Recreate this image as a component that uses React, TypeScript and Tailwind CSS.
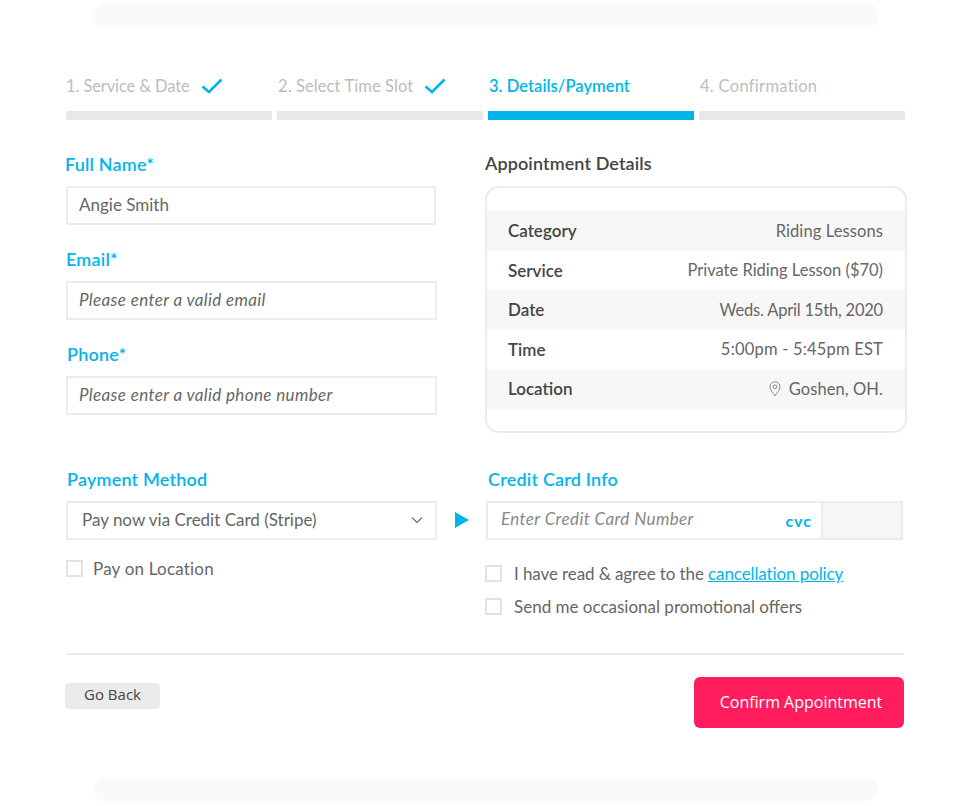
import React from "react";

const font = { fontFamily: '"Lato", "Open Sans", sans-serif' };

function Check() {
  return (
    <svg width="22" height="16" viewBox="0 0 22 16" fill="none" className="ml-[11px]">
      <path d="M1.5 8.5 L8 14 L20.5 1.5" stroke="#00b5ea" strokeWidth="2.6" />
    </svg>
  );
}

function Step({ label, done, active, cls }: { label: string; done?: boolean; active?: boolean; cls: string }) {
  return (
    <div className="w-[206px]">
      <div className="h-[37px] flex items-start">
        <div className={"flex items-center h-[24px] text-[16.5px] " + (active ? "text-[#00b5ea] font-semibold " : "text-[#bdbdbd] ") + cls}>
          {label}
          {done && <Check />}
        </div>
      </div>
      <div className={"h-[9px] " + (active ? "bg-[#00b5ea]" : "bg-[#e8e8e8]")} />
    </div>
  );
}

function Label({ children, cls = "" }: { children: React.ReactNode; cls?: string }) {
  return <div className={"h-[24px] flex items-center text-[18px] font-semibold tracking-[0.2px] text-[#00b5ea] " + cls}>{children}</div>;
}

function Input({ text, italic, cls = "" }: { text: string; italic?: boolean; cls?: string }) {
  return (
    <div className={"h-[39px] mt-[10px] border-2 border-[#ececec] flex items-center pl-[11px] pb-[2px] text-[17px] text-[#666] " + (italic ? "italic tracking-[0.38px] " : "") + cls}>
      {text}
    </div>
  );
}

function Row({ k, v, gray, pin, track }: { k: string; v: string; gray?: boolean; pin?: boolean; track: string }) {
  return (
    <div className={"h-[39.5px] flex items-center justify-between pl-[21px] pr-[22px] " + (gray ? "bg-[#f7f7f7]" : "bg-white")}>
      <span className="text-[17px] font-semibold text-[#444]">{k}</span>
      <span className={"flex items-center pt-[1px] text-[16.5px] text-[#666] " + track}>
        {pin && (
          <svg width="12" height="16" viewBox="0 0 12 16" fill="none" className="mr-[8px]" stroke="#8a8a8a" strokeWidth="1">
            <path d="M6 15 C4 11.5 1 9 1 5.8 A5 5 0 0 1 11 5.8 C11 9 8 11.5 6 15 Z" />
            <circle cx="6" cy="5.8" r="1.9" />
          </svg>
        )}
        {v}
      </span>
    </div>
  );
}

function Box({ children, cls = "", gap = "mr-[12px]" }: { children: React.ReactNode; cls?: string; gap?: string }) {
  return (
    <div className={"flex items-center text-[17px] text-[#666] " + cls}>
      <span className={"w-[17px] h-[17px] border-2 border-[#e2e2e2] shrink-0 " + gap} />
      <span>{children}</span>
    </div>
  );
}

export default function App() {
  return (
    <div className="w-[973px] h-[806px] bg-white overflow-hidden pt-[4px]" style={font}>
      <div className="h-[23px] mx-[94px] rounded-[12px] bg-[#fafafa]" />

      <div className="mt-[47px] ml-[66px] flex gap-[5px]">
        <Step label="1. Service & Date" done cls="tracking-[-0.1px]" />
        <Step label="2. Select Time Slot" done cls="pl-[1px] tracking-[0.1px]" />
        <Step label="3. Details/Payment" active cls="pl-[1px] tracking-[0.05px]" />
        <Step label="4. Confirmation" cls="pl-[1px] tracking-[0.3px]" />
      </div>

      <div className="mt-[32px] ml-[66px] flex">
        <div className="w-[371px]">
          <Label cls="-ml-[1px]">Full Name*</Label>
          <Input text="Angie Smith" cls="w-[370px]" />
          <Label cls="mt-[22px]">Email*</Label>
          <Input text="Please enter a valid email" italic />
          <Label cls="mt-[22px] ml-[1px]">Phone*</Label>
          <Input text="Please enter a valid phone number" italic />
        </div>
        <div className="ml-[48px] w-[422px]">
          <div className="h-[24px] pb-[1px] flex items-center text-[18px] font-semibold tracking-[0.1px] text-[#444]">Appointment Details</div>
          <div className="mt-[10px] h-[247px] border-2 border-[#ececec] rounded-[14px] pt-[23px] overflow-hidden">
            <Row k="Category" v="Riding Lessons" gray track="tracking-[0.1px]" />
            <Row k="Service" v="Private Riding Lesson ($70)" track="tracking-[0px]" />
            <Row k="Date" v="Weds. April 15th, 2020" gray track="tracking-[-0.2px]" />
            <Row k="Time" v="5:00pm - 5:45pm EST" track="tracking-[0.2px]" />
            <Row k="Location" v="Goshen, OH." gray pin track="tracking-[0.1px]" />
          </div>
        </div>
      </div>

      <div className="mt-[34px] ml-[66px] flex">
        <div className="w-[371px]">
          <Label cls="ml-[1px]">Payment Method</Label>
          <div className="mt-[10px] h-[39px] border-2 border-[#ececec] flex items-center justify-between pl-[14px] pr-[12px] pb-[2px] text-[17px] text-[#666]">
            <span>Pay now via Credit Card (Stripe)</span>
            <svg width="12" height="8" viewBox="0 0 12 8" fill="none" stroke="#777" strokeWidth="1.3">
              <path d="M1 1.5 L6 6.5 L11 1.5" />
            </svg>
          </div>
          <Box cls="mt-[16px] tracking-[0.2px]" gap="mr-[10px]">Pay on Location</Box>
        </div>
        <div className="w-[49px] pt-[45px] pl-[18px]">
          <svg width="14" height="16" viewBox="0 0 14 16">
            <path d="M0 0 L14 8 L0 16 Z" fill="#00b5ea" />
          </svg>
        </div>
        <div className="w-[417px]">
          <Label cls="ml-[2px]">Credit Card Info</Label>
          <div className="mt-[10px] h-[39px] border-2 border-[#ececec] flex items-stretch">
            <div className="flex-1 flex items-center justify-between pl-[13px] pr-[9px]">
              <span className="italic text-[17px] tracking-[0.4px] text-[#888] pb-[3px]">Enter Credit Card Number</span>
              <span className="text-[16px] font-bold tracking-[1px] text-[#00b5ea]">cvc</span>
            </div>
            <div className="w-[80px] border-l-2 border-[#ececec] bg-[#f6f6f6]" />
          </div>
          <Box cls="mt-[21px] -ml-[1px] tracking-[-0.1px]">
            <span>I have read &amp; agree to the <span className="text-[#00b5ea] underline">cancellation policy</span></span>
          </Box>
          <Box cls="mt-[7.5px] -ml-[1px]">Send me occasional promotional offers</Box>
        </div>
      </div>

      <div className="mt-[33px] ml-[66px] mr-[69px] h-[2px] bg-[#ececec]" />

      <div className="ml-[65px] mr-[69px] mt-[22px] flex justify-between items-start">
        <button className="mt-[6px] w-[95px] h-[26px] pb-[2px] rounded-[4px] bg-[#ebebeb] text-[15px] text-[#444]" style={{ fontFamily: '"Open Sans", sans-serif' }}>
          Go Back
        </button>
        <button className="w-[210px] h-[51px] pl-[4px] rounded-[6px] bg-[#ff1d5e] text-[16px] text-white" style={{ fontFamily: '"Open Sans", sans-serif' }}>
          Confirm Appointment
        </button>
      </div>

      <div className="mt-[50px] h-[23px] ml-[94px] mr-[95px] rounded-[12px] bg-[#fafafa]" />
    </div>
  );
}
